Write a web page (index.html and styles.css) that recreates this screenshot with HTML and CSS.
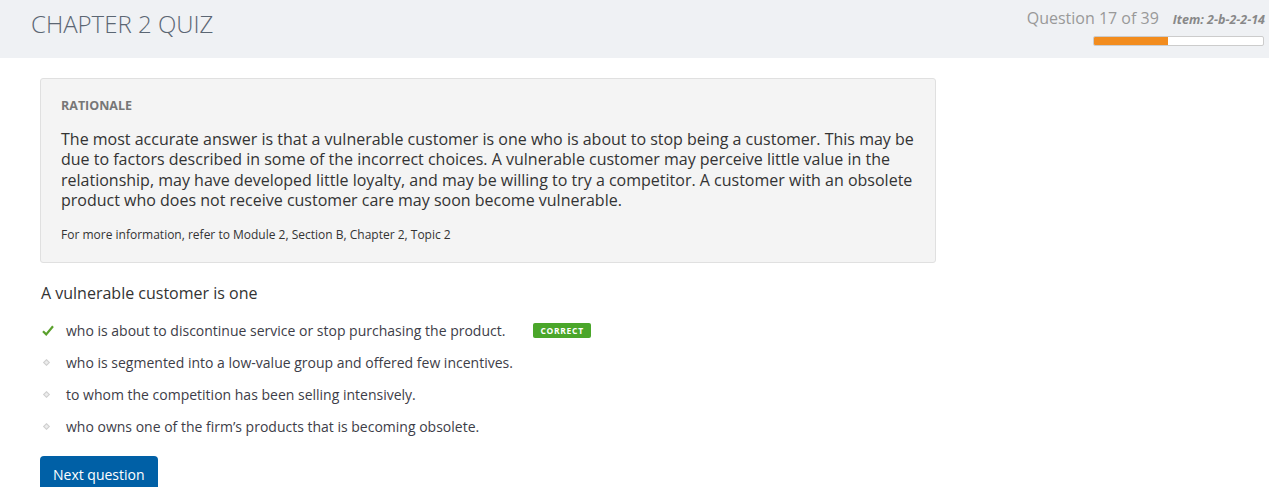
FILE: index.html
```html
<!DOCTYPE html>
<html>
<head>
<meta charset="utf-8">
<link rel="stylesheet" href="styles.css">
</head>
<body>
<header class="topbar">
  <h1 class="title">CHAPTER 2 QUIZ</h1>
  <div class="status">
    <div class="status-line">
      <span class="qcount">Question 17 of 39</span>
      <span class="item">Item: 2-b-2-2-14</span>
    </div>
    <div class="progress"><div class="progress-fill" style="width:43.6%"></div></div>
  </div>
</header>
<main class="content">
  <section class="rationale">
    <h2 class="rationale-head">RATIONALE</h2>
    <p class="rationale-text">The most accurate answer is that a vulnerable customer is one who is about to stop being a customer. This may be due to factors described in some of the incorrect choices. A vulnerable customer may perceive little value in the relationship, may have developed little loyalty, and may be willing to try a competitor. A customer with an obsolete product who does not receive customer care may soon become vulnerable.</p>
    <p class="rationale-ref">For more information, refer to Module 2, Section B, Chapter 2, Topic 2</p>
  </section>
  <p class="question">A vulnerable customer is one</p>
  <ul class="options">
    <li class="option">
      <span class="mark"><svg width="12" height="11" viewBox="0 0 12 11"><path d="M1 6.2 L4.2 9.4 L11 1.2" fill="none" stroke="#5aa02c" stroke-width="2.2"/></svg></span>
      <span class="opt-text">who is about to discontinue service or stop purchasing the product.</span>
      <span class="badge">CORRECT</span>
    </li>
    <li class="option">
      <span class="mark"><span class="dot"></span></span>
      <span class="opt-text">who is segmented into a low-value group and offered few incentives.</span>
    </li>
    <li class="option">
      <span class="mark"><span class="dot"></span></span>
      <span class="opt-text">to whom the competition has been selling intensively.</span>
    </li>
    <li class="option">
      <span class="mark"><span class="dot"></span></span>
      <span class="opt-text">who owns one of the firm’s products that is becoming obsolete.</span>
    </li>
  </ul>
  <button class="next">Next question</button>
</main>
</body>
</html>
```
FILE: styles.css
```css
* { box-sizing: border-box; }
body {
  margin: 0;
  font-family: "Open Sans", "Noto Sans", sans-serif;
  color: #333;
  background: #fff;
}
.topbar {
  height: 58px;
  background: #eff1f4;
  display: flex;
  justify-content: space-between;
  align-items: flex-start;
  padding: 0 4px 0 31px;
}
.title {
  margin: 10px 0 0 0;
  font-size: 24px;
  font-weight: 300;
  color: #5b6673;
  line-height: 28px;
}
.status {
  display: flex;
  flex-direction: column;
  align-items: flex-end;
  padding-top: 7px;
}
.status-line {
  display: flex;
  align-items: baseline;
  gap: 14px;
}
.qcount {
  font-size: 16px;
  color: #999;
  line-height: 22px;
}
.item {
  font-size: 12.5px;
  font-weight: 700;
  font-style: italic;
  color: #888;
}
.progress {
  margin-top: 7px;
  margin-right: 1px;
  width: 171px;
  height: 10px;
  border: 1px solid #ccc;
  border-radius: 2px;
  background: #fff;
  overflow: hidden;
}
.progress-fill {
  height: 100%;
  background: #f28c1e;
}
.content {
  padding: 20px 0 0 40px;
}
.rationale {
  width: 896px;
  background: #f4f4f4;
  border: 1px solid #e0e0e0;
  border-radius: 3px;
  padding: 19px 20px 19px 20px;
}
.rationale-head {
  margin: 0;
  font-size: 12.5px;
  font-weight: 700;
  color: #777;
  line-height: 16px;
}
.rationale-text {
  margin: 15px 0 0 0;
  font-size: 16px;
  line-height: 20.3px;
  color: #333;
}
.rationale-ref {
  margin: 17px 0 0 0;
  font-size: 12px;
  line-height: 16px;
  color: #333;
}
.question {
  margin: 19px 0 0 1px;
  font-size: 16px;
  line-height: 22px;
  color: #333;
}
.options {
  list-style: none;
  margin: 10px 0 0 0;
  padding: 0;
}
.option {
  display: flex;
  align-items: center;
  height: 32px;
  font-size: 14px;
  color: #3d3d48;
}
.mark {
  width: 26px;
  display: flex;
  justify-content: flex-start;
  padding-left: 2px;
}
.dot {
  display: inline-block;
  width: 5px;
  height: 5px;
  margin-left: 2px;
  border: 1px solid #cfcfcf;
  background: #ececec;
  transform: rotate(45deg);
}
.badge {
  margin-left: 28px;
  background: #4aa62a;
  color: #fff;
  font-size: 8.5px;
  font-weight: 700;
  letter-spacing: 0.7px;
  padding: 1px 7px;
  line-height: 13px;
  border-radius: 2px;
}
.next {
  margin-top: 14px;
  background: #0060a6;
  color: #fff;
  font-family: "Open Sans", sans-serif;
  font-size: 14px;
  border: none;
  border-radius: 4px;
  padding: 9px 13px 10px 13px;
  line-height: 20px;
}
```
